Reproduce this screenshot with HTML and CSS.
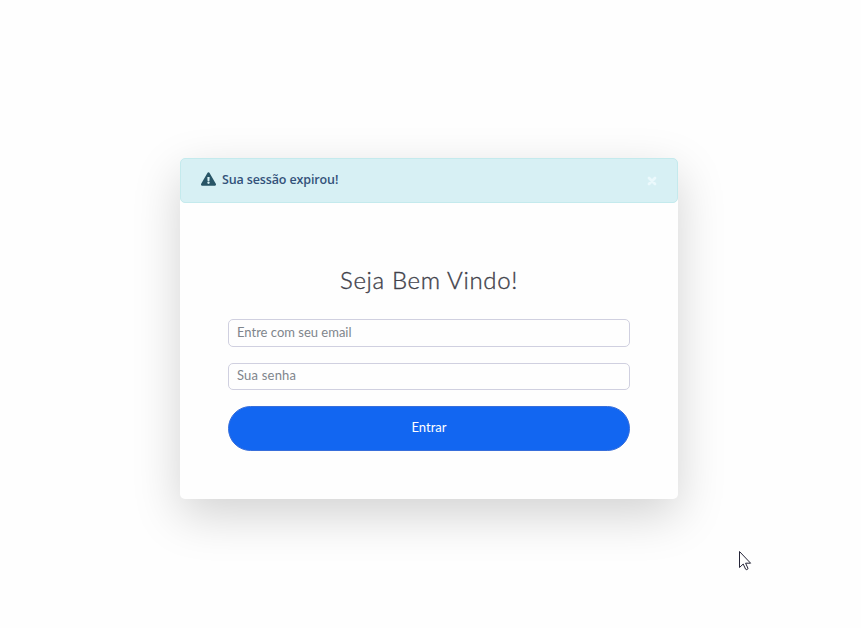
FILE: index.html
```html
<!DOCTYPE html>
<html lang="pt-BR">
<head>
<meta charset="utf-8">
<title>Entrar</title>
<link rel="stylesheet" href="styles.css">
</head>
<body>
<main class="card">
  <div class="alert" role="alert">
    <svg class="alert-icon" viewBox="0 0 576 512"><path fill="currentColor" d="M569.5 440C588 472 564.800 512 527.900 512H48.100c-36.900 0-60-40.100-41.600-72L246.400 24c18.500-32 64.700-32 83.200 0l239.900 416zM288 354c-25.400 0-46 20.600-46 46s20.600 46 46 46 46-20.600 46-46-20.600-46-46-46zm-43.700-165.300l7.400 136c.3 6.400 5.600 11.300 12 11.300h48.500c6.400 0 11.600-5 12-11.300l7.400-136c.4-6.900-5.100-12.700-12-12.700h-63.400c-6.900 0-12.300 5.800-11.900 12.700z"/></svg>
    <strong class="alert-text"><span>Sua sessão expirou!</span></strong>
    <button class="close" type="button" aria-label="Fechar"><svg viewBox="0 0 10 10"><path d="M2 2l6 6M8 2L2 8"/></svg></button>
  </div>
  <form class="form">
    <h1 class="title"><span>Seja Bem Vindo!</span></h1>
    <input class="field email" type="text" placeholder="Entre com seu email">
    <input class="field password" type="password" placeholder="Sua senha">
    <button class="submit" type="button">Entrar</button>
  </form>
</main>
<svg class="pointer" viewBox="0 0 13 21"><path d="M.5 1.500v16l3.700-3.500 2.400 5.200c.5 1 2.800.2 2.300-1l-2.300-5h5z"/></svg>
</body>
</html>
```
FILE: styles.css
```css
* { box-sizing: border-box; }
body {
  margin: 0;
  height: 628px;
  padding-top: 158px;
  overflow: hidden;
  background: #fefefe;
  font-family: Lato, "Noto Sans", sans-serif;
  font-size: 13px;
}
.card {
  width: 498px;
  height: 341px;
  margin-left: 180px;
  border-radius: 5px;
  background: #fefefe;
  box-shadow: 0 16px 48px rgba(0, 0, 0, .175);
}
.alert {
  display: flex;
  align-items: center;
  height: 45px;
  padding: 0 20px;
  border: 1px solid #c4eaed;
  border-radius: 5px;
  background: #d7f0f4;
}
.alert-icon { width: 15px; height: 14px; margin-top: -3px; color: #285566; }
.alert-text {
  flex: 1;
  margin: -2px 0 0 6px;
  color: #33527a;
  font-family: "Open Sans", "Noto Sans", sans-serif;
  font-size: 12.500px;
  font-weight: 600;
  letter-spacing: -.13px;
}
.close { display: flex; width: 10px; height: 10px; padding: 0; border: 0; background: none; }
.close svg { width: 10px; height: 10px; fill: none; stroke: #ebf9fc; stroke-width: 2.700; stroke-linecap: round; }
.form { display: flex; flex-direction: column; padding: 61px 48px 0; }
.title {
  height: 32px;
  margin: 0 0 23px;
  color: #41414a;
  font-size: 24px;
  font-weight: 300;
  line-height: 32px;
  letter-spacing: .65px;
  text-align: center;
  -webkit-text-stroke: .35px #41414a;
}
.field {
  width: 402px;
  height: 28px;
  margin: 0 0 16px;
  padding: 0 8px 2px;
  border: 1px solid #d0d0e0;
  border-radius: 5px;
  outline: none;
  background: #fefefe;
  font: 13px Lato, "Noto Sans", sans-serif;
}
.field::placeholder { color: #7e858c; opacity: 1; }
.password { height: 27px; padding-bottom: 3px; letter-spacing: .2px; }
.submit {
  height: 45px;
  padding: 0 0 4px;
  border: 1px solid #376edb;
  border-radius: 23px;
  background: #1266f1;
  color: #fff;
  font: 13px Lato, "Noto Sans", sans-serif;
}
.pointer {
  position: absolute;
  left: 739px;
  top: 550px;
  width: 13px;
  height: 21px;
  fill: #fefefe;
  stroke: #252538;
  stroke-width: 1;
}
```
